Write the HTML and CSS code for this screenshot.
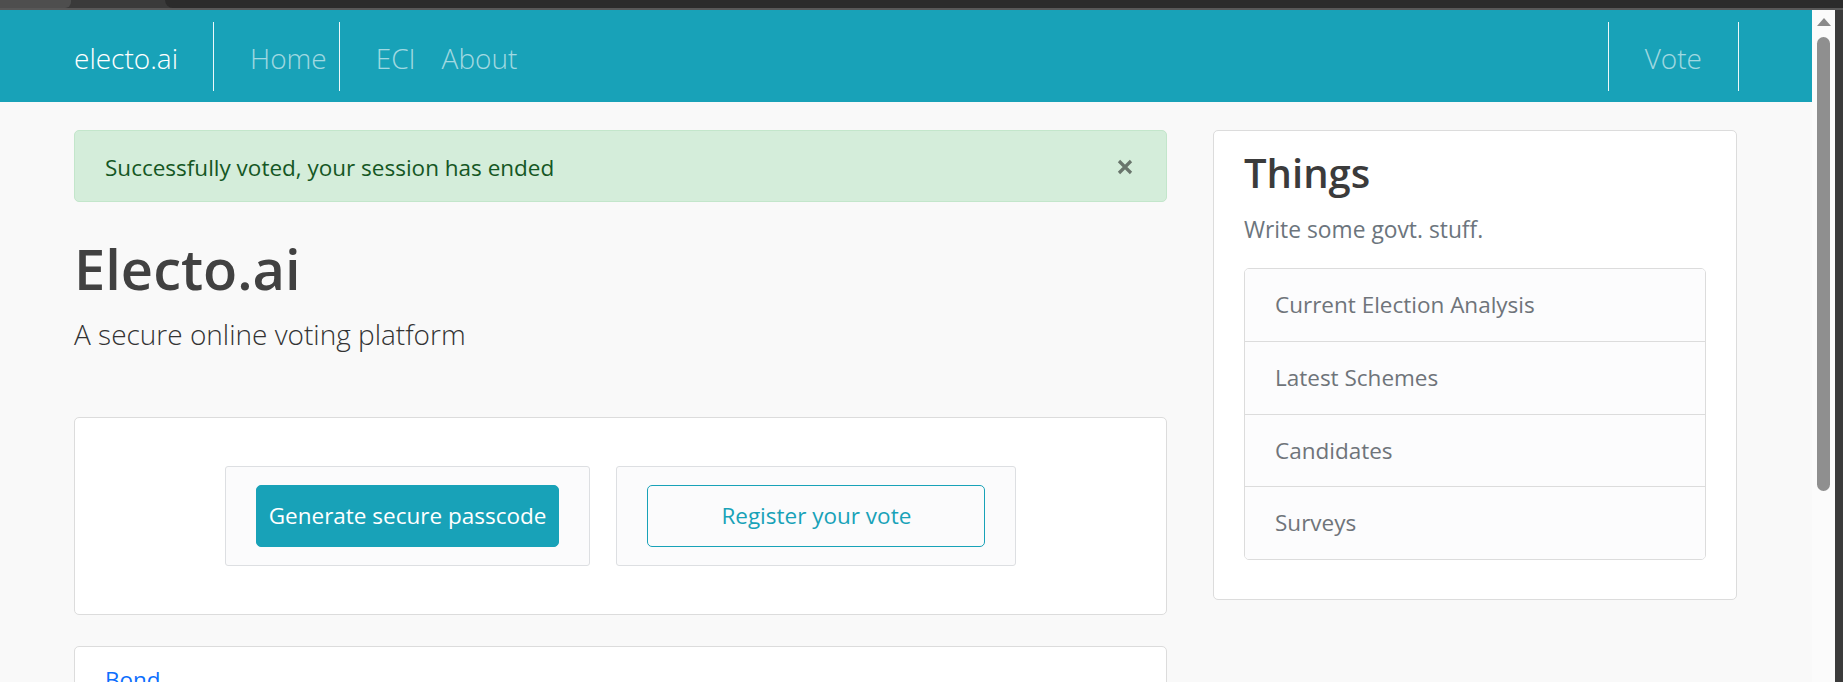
FILE: index.html
```html
<!DOCTYPE html>
<html lang="en">
<head>
<meta charset="utf-8">
<title>Electo.ai</title>
<link rel="stylesheet" href="styles.css">
</head>
<body>
<div class="chrome">
  <div class="chrome-tab"></div>
  <div class="chrome-mid"></div>
  <div class="chrome-dark"></div>
</div>
<div class="window">
  <div class="page">
    <nav class="navbar">
      <a class="brand" href="#">electo.ai</a>
      <a class="nav-link boxed home" href="#">Home</a>
      <a class="nav-link eci" href="#">ECI</a>
      <a class="nav-link about" href="#">About</a>
      <div class="spacer"></div>
      <a class="nav-link boxed vote" href="#">Vote</a>
    </nav>
    <main class="layout">
      <section class="main-col">
        <div class="alert">
          <span>Successfully voted, your session has ended</span>
          <button class="close" type="button" aria-label="Close">
            <svg width="16" height="16" viewBox="0 0 16 16"><path d="M2 2 L14 14 M14 2 L2 14" stroke="#000" stroke-width="3.2" stroke-linecap="butt"/></svg>
          </button>
        </div>
        <h1 class="title">Electo.ai</h1>
        <p class="lead">A secure online voting platform</p>
        <div class="card actions">
          <div class="action-box"><button class="btn btn-info" type="button">Generate secure passcode</button></div>
          <div class="action-box"><button class="btn btn-outline" type="button">Register your vote</button></div>
        </div>
        <div class="card bond">
          <a href="#">Bond</a>
        </div>
      </section>
      <aside class="side-card">
        <h2 class="side-title">Things</h2>
        <p class="side-text">Write some govt. stuff.</p>
        <ul class="list-group">
          <li>Current Election Analysis</li>
          <li>Latest Schemes</li>
          <li>Candidates</li>
          <li>Surveys</li>
        </ul>
      </aside>
    </main>
  </div>
  <div class="scrollbar">
    <span class="arrow"></span>
    <span class="thumb"></span>
  </div>
  <div class="edge"></div>
</div>
</body>
</html>
```
FILE: styles.css
```css
* { box-sizing: border-box; }

html, body {
  margin: 0;
  padding: 0;
  width: 1843px;
  height: 682px;
  overflow: hidden;
  background: #3a3a3a;
  font-family: "Open Sans", "Noto Sans", sans-serif;
}

.chrome {
  display: flex;
  height: 10px;
  background: #3a3a3a;
  border-bottom: 2px solid #585858;
}
.chrome-tab {
  width: 71px;
  background: #4e4e4e;
  border-radius: 0 0 6px 0;
}
.chrome-mid { width: 94px; background: #3a3a3a; }
.chrome-dark { flex: 1; background: #2b2b2b; border-radius: 0 0 0 8px; }

.window {
  display: flex;
  height: 672px;
}

.page {
  width: 1812px;
  height: 672px;
  overflow: hidden;
  background: #f9f9f9;
  font-size: 22.5px;
  line-height: 1.5;
  color: #212529;
}

/* Navbar */
.navbar {
  display: flex;
  align-items: stretch;
  height: 92px;
  padding: 12px 73px 11px 74px;
  background: #18a2b8;
}
.navbar a {
  text-decoration: none;
  display: flex;
  align-items: center;
  padding-top: 2px;
  font-weight: 300;
  font-size: 28px;
}
.brand { color: #fff; padding-right: 35px; }
.nav-link { color: rgba(255, 255, 255, 0.6); }
.boxed {
  border-left: 1px solid rgba(255, 255, 255, 0.92);
  border-right: 1px solid rgba(255, 255, 255, 0.92);
}
.home { padding-left: 36px; padding-right: 12px; }
.eci { margin-left: 36px; }
.about { margin-left: 26px; }
.spacer { flex: 1; }
.vote { padding-left: 36px; padding-right: 36px; }

/* Layout */
.layout {
  display: grid;
  grid-template-columns: 1093px 524px;
  column-gap: 46px;
  align-items: start;
  padding: 28px 0 0 74px;
}

.alert {
  display: flex;
  align-items: center;
  justify-content: space-between;
  height: 72px;
  padding: 4px 33px 0 30px;
  background: #d4edda;
  border: 1px solid #c3e6cb;
  border-radius: 5px;
  color: #155724;
}
.close {
  display: flex;
  padding: 0;
  margin-top: -2px;
  border: 0;
  background: transparent;
  opacity: 0.5;
}

.title {
  margin: 33px 0 11px;
  font-size: 56px;
  line-height: 1.2;
  font-weight: 600;
  color: #414141;
}
.lead {
  margin: 0 0 62px;
  font-size: 28px;
  line-height: 42px;
  font-weight: 300;
  color: #333;
}

.card {
  background: #fff;
  border: 1px solid #dcdcdc;
  border-radius: 5px;
}
.actions {
  display: flex;
  justify-content: center;
  gap: 26px;
  padding: 48px 30px;
}
.action-box {
  padding: 18px 30px;
  background: #fbfbfc;
  border: 1px solid #dddfe2;
  border-radius: 3px;
}
.btn {
  display: block;
  font-family: inherit;
  font-size: 22.5px;
  line-height: 33.75px;
  padding: 13px 12px;
  border-radius: 5px;
  border: 1px solid #18a2b8;
  cursor: pointer;
}
.btn-info { background: #18a2b8; color: #fff; }
.btn-outline { background: #fbfbfc; color: #18a2b8; padding: 13px 73px; }

.bond {
  margin-top: 31px;
  padding: 16px 30px;
  height: 120px;
}
.bond a { color: #0d6efd; text-decoration: none; }

/* Side card */
.side-card {
  background: #fff;
  border: 1px solid #dcdcdc;
  border-radius: 5px;
  padding: 18px 30px 39px;
}
.side-title {
  margin: 0;
  font-size: 40px;
  line-height: 48px;
  font-weight: 600;
  color: #3b3b3b;
}
.side-text {
  margin: 16px 0 21px;
  font-size: 22.8px;
  color: #6c757d;
}
.list-group {
  list-style: none;
  margin: 0;
  padding: 0;
  border: 1px solid #dcdcdc;
  border-radius: 5px;
  overflow: hidden;
}
.list-group li {
  padding: 19px 30px;
  background: #fcfcfd;
  color: #6f747a;
  border-top: 1px solid #dcdcdc;
}
.list-group li:first-child { border-top: 0; }

/* Scrollbar */
.scrollbar {
  display: flex;
  flex-direction: column;
  align-items: flex-start;
  width: 23px;
  height: 672px;
  padding-left: 5px;
  background: #fbfbfb;
}
.arrow {
  margin-top: 8px;
  width: 0;
  height: 0;
  border-left: 7px solid transparent;
  border-right: 7px solid transparent;
  border-bottom: 8px solid #8a8a8a;
}
.thumb {
  margin-top: 11px;
  width: 13px;
  height: 454px;
  border-radius: 7px;
  background: #8f8f8f;
}
.edge {
  flex: 1;
  background: #3b3b3b;
}
```
